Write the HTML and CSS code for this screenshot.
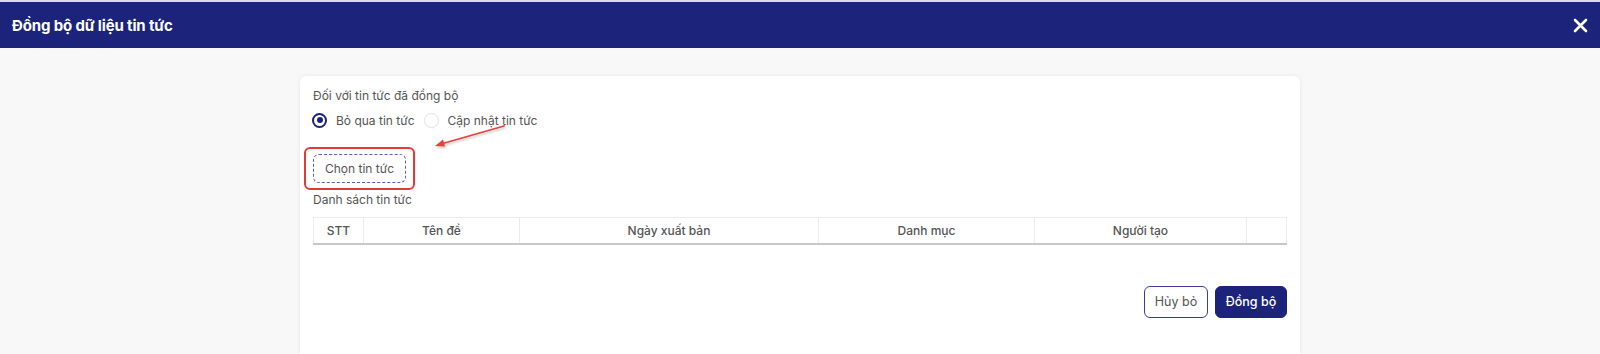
FILE: index.html
```html
<!DOCTYPE html>
<html lang="vi">
<head>
<meta charset="utf-8">
<title>Đồng bộ dữ liệu tin tức</title>
<link rel="stylesheet" href="styles.css">
</head>
<body>
<header class="topbar">
  <h1 class="title">Đồng bộ dữ liệu tin tức</h1>
  <button class="close" aria-label="Đóng">
    <svg width="15" height="15" viewBox="0 0 15 15"><path d="M2 2 L13 13 M13 2 L2 13" stroke="#fff" stroke-width="2.6" stroke-linecap="round"/></svg>
  </button>
</header>
<main class="stage">
  <section class="card">
    <div class="label">Đối với tin tức đã đồng bộ</div>
    <div class="radios">
      <label class="radio"><span class="dot checked"></span>Bỏ qua tin tức</label>
      <label class="radio"><span class="dot"></span>Cập nhật tin tức</label>
    </div>
    <div class="pick-wrap">
      <button class="pick">Chọn tin tức</button>
      <span class="annot-box"></span>
    </div>
    <div class="label list-label">Danh sách tin tức</div>
    <table class="grid">
      <colgroup>
        <col style="width:50px"><col style="width:156px"><col style="width:299px"><col style="width:216px"><col style="width:212px"><col>
      </colgroup>
      <thead>
        <tr><th>STT</th><th>Tên đề</th><th>Ngày xuất bản</th><th>Danh mục</th><th>Người tạo</th><th></th></tr>
      </thead>
    </table>
    <div class="actions">
      <button class="btn ghost">Hủy bỏ</button>
      <button class="btn primary">Đồng bộ</button>
    </div>
    <svg class="arrow" width="90" height="36" viewBox="0 0 90 36">
      <defs>
        <filter id="sh" x="-20%" y="-50%" width="140%" height="200%">
          <feDropShadow dx="1" dy="1.5" stdDeviation="1" flood-color="#000" flood-opacity="0.25"/>
        </filter>
      </defs>
      <g filter="url(#sh)">
        <line x1="75" y1="4" x2="12" y2="22" stroke="#e8403c" stroke-width="1.8" stroke-linecap="round"/>
        <path d="M6 24 L14 17.5 L16 24.5 Z" fill="#e8403c"/>
      </g>
    </svg>
  </section>
</main>
</body>
</html>
```

FILE: styles.css
```css
* { box-sizing: border-box; }
html, body { margin: 0; padding: 0; }
body {
  font-family: Inter, "Noto Sans", "Liberation Sans", sans-serif;
  background: #f8f8f9;
  height: 354px;
  overflow: hidden;
  border-top: 2px solid #d9d9e0;
}
.topbar {
  height: 46px;
  background: #1b237b;
  display: flex;
  align-items: center;
  justify-content: space-between;
  padding: 0 13px 0 12px;
}
.title {
  margin: 0;
  color: #fff;
  font-size: 15px;
  font-weight: 700;
  letter-spacing: -0.15px;
}
.close {
  background: none;
  border: 0;
  padding: 0;
  display: flex;
  margin-right: -1px;
}
.stage {
  display: flex;
  justify-content: center;
  padding-top: 28px;
}
.card {
  position: relative;
  width: 1000px;
  height: 278px;
  background: #fff;
  border-radius: 6px 6px 0 0;
  box-shadow: 0 0 4px rgba(0,0,0,0.08);
  padding: 12px 13px 0 13px;
  color: #555;
  font-size: 12px;
}
.label { line-height: 16px; }
.radios {
  display: flex;
  gap: 9px;
  margin-top: 7px;
  height: 18px;
  align-items: center;
}
.radio {
  display: flex;
  align-items: center;
  gap: 9px;
  color: #555;
}
.dot {
  width: 15px;
  height: 15px;
  border-radius: 50%;
  border: 1px solid #e2e2e8;
  background: #fff;
  display: inline-block;
  position: relative;
}
.dot.checked {
  border: 2px solid #1b237b;
  margin-left: -1px;
}
.dot.checked::after {
  content: "";
  position: absolute;
  left: 2.5px; top: 2.5px;
  width: 6px; height: 6px;
  border-radius: 50%;
  background: #1b237b;
}
.pick-wrap {
  position: relative;
  margin-top: 25px;
  height: 29px;
  width: 93px;
}
.pick {
  width: 93px;
  height: 29px;
  border: 1px dashed #5a5fae;
  border-radius: 6px;
  background: #fff;
  color: #555;
  font-family: inherit;
  font-size: 12px;
  padding: 0;
}
.annot-box {
  position: absolute;
  left: -9px; top: -7px;
  width: 111px; height: 43px;
  border: 2px solid #e53935;
  border-radius: 6px;
  pointer-events: none;
}
.list-label { margin-top: 9px; }
.grid {
  margin-top: 9px;
  width: 974px;
  border-collapse: collapse;
  table-layout: fixed;
}
.grid th {
  height: 26px;
  border: 1px solid #ececef;
  border-bottom: 2px solid #c8c8cc;
  font-weight: 500;
  font-size: 12px;
  color: #555;
  padding: 0;
  text-align: center;
}
.actions {
  display: flex;
  justify-content: flex-end;
  gap: 7px;
  margin-top: 41px;
}
.btn {
  height: 32px;
  border-radius: 6px;
  font-family: inherit;
  font-size: 12.5px;
  padding: 0;
}
.ghost {
  width: 64px;
  background: #fff;
  border: 1px solid #3a3f95;
  color: #555;
}
.primary {
  width: 72px;
  background: #1b237b;
  border: 1px solid #1b237b;
  color: #fff;
  font-weight: 500;
}
.arrow {
  position: absolute;
  left: 129px;
  top: 46px;
  overflow: visible;
}
```
